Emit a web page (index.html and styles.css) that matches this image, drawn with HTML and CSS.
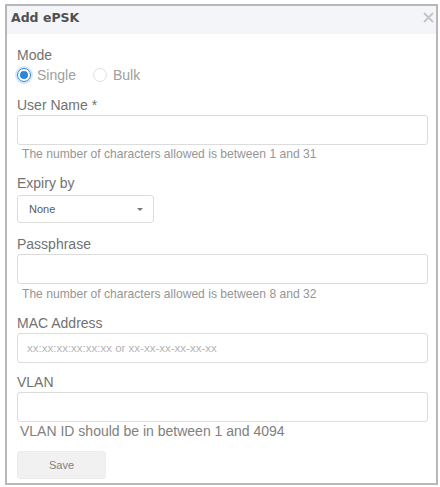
FILE: index.html
```html
<!DOCTYPE html>
<html>
<head>
<meta charset="utf-8">
<title>Add ePSK</title>
<link rel="stylesheet" href="styles.css">
</head>
<body>
<div class="dialog">
  <div class="header">
    <span class="title">Add ePSK</span>
    <svg class="close" width="11" height="11" viewBox="0 0 11 11"><path d="M1 1L10 10M10 1L1 10" stroke="#c4c4c4" stroke-width="1.8" fill="none"/></svg>
  </div>
  <div class="body">
    <div class="label first">Mode</div>
    <div class="radios">
      <span class="radio checked"></span><span class="radio-text">Single</span>
      <span class="radio second"></span><span class="radio-text">Bulk</span>
    </div>

    <div class="label gap14">User Name *</div>
    <div class="input"></div>
    <div class="hint">The number of characters allowed is between 1 and 31</div>

    <div class="label gap14">Expiry by</div>
    <div class="select"><span>None</span><span class="caret"></span></div>

    <div class="label gap13">Passphrase</div>
    <div class="input"></div>
    <div class="hint hint-b">The number of characters allowed is between 8 and 32</div>

    <div class="label gap14">MAC Address</div>
    <div class="input"><span class="placeholder">xx:xx:xx:xx:xx:xx or xx-xx-xx-xx-xx-xx</span></div>

    <div class="label gap11">VLAN</div>
    <div class="input"></div>
    <div class="hint-vlan">VLAN ID should be in between 1 and 4094</div>

    <div class="save">Save</div>
  </div>
</div>
</body>
</html>
```
FILE: styles.css
```css
* { box-sizing: border-box; }
body {
  margin: 0;
  background: #fff;
  font-family: "Liberation Sans", Arial, sans-serif;
}
.dialog {
  margin: 4px 0 0 5px;
  width: 433px;
  height: 481px;
  border: 2px solid #b8b8b8;
  background: #fff;
}
.header {
  height: 28px;
  background: #f3f5f8;
  display: flex;
  justify-content: space-between;
  padding: 4px 0 0 4px;
}
.title {
  font-family: "DejaVu Sans", sans-serif;
  font-weight: bold;
  font-size: 12.5px;
  line-height: 15px;
  color: #505050;
}
.close {
  margin: 2px 2px 0 0;
}
.body {
  padding: 13px 8px 0 10px;
}
.label {
  font-size: 14px;
  line-height: 16px;
  color: #727272;
}
.gap14 { margin-top: 14px; }
.gap13 { margin-top: 13px; }
.gap11 { margin-top: 11px; }
.radios {
  margin-top: 4px;
  height: 16px;
  display: flex;
  align-items: center;
  font-size: 14px;
  color: #a0a0a0;
}
.radio {
  width: 14px;
  height: 14px;
  border-radius: 50%;
  border: 1px solid #e0e0e0;
  background: #fff;
  position: relative;
}
.radio.checked {
  border-color: #2f86d8;
  box-shadow: 0 0 0 2px #d6e8f8;
}
.radio.checked::after {
  content: "";
  position: absolute;
  left: 2px;
  top: 2px;
  width: 8px;
  height: 8px;
  border-radius: 50%;
  background: #2f86d8;
}
.radio.second { margin-left: 17px; }
.radio-text { margin-left: 6px; line-height: 16px; }
.input {
  margin-top: 2px;
  height: 30px;
  border: 1px solid #dcdcdc;
  border-radius: 3px;
  background: #fff;
  display: flex;
  align-items: center;
  padding-left: 9px;
}
.placeholder {
  font-size: 11.5px;
  color: #b4b4b4;
}
.hint {
  margin-top: 2px;
  padding-left: 5px;
  font-size: 12.1px;
  line-height: 14px;
  color: #959595;
}
.hint-b { margin-top: 3px; }
.hint-vlan {
  margin-top: 1px;
  padding-left: 3px;
  font-size: 14px;
  line-height: 16px;
  color: #808080;
}
.select {
  margin-top: 4px;
  width: 137px;
  height: 28px;
  border: 1px solid #dcdcdc;
  border-radius: 3px;
  display: flex;
  align-items: center;
  justify-content: space-between;
  padding: 0 10px 0 11px;
  font-size: 11px;
  color: #5a5a5a;
}
.caret {
  width: 0;
  height: 0;
  border-left: 3px solid transparent;
  border-right: 3px solid transparent;
  border-top: 3px solid #777;
}
.save {
  margin-top: 12px;
  width: 89px;
  height: 28px;
  background: #f1f1f1;
  border: 1px solid #ececec;
  border-radius: 3px;
  display: flex;
  align-items: center;
  justify-content: center;
  font-size: 11px;
  color: #808080;
}
```
